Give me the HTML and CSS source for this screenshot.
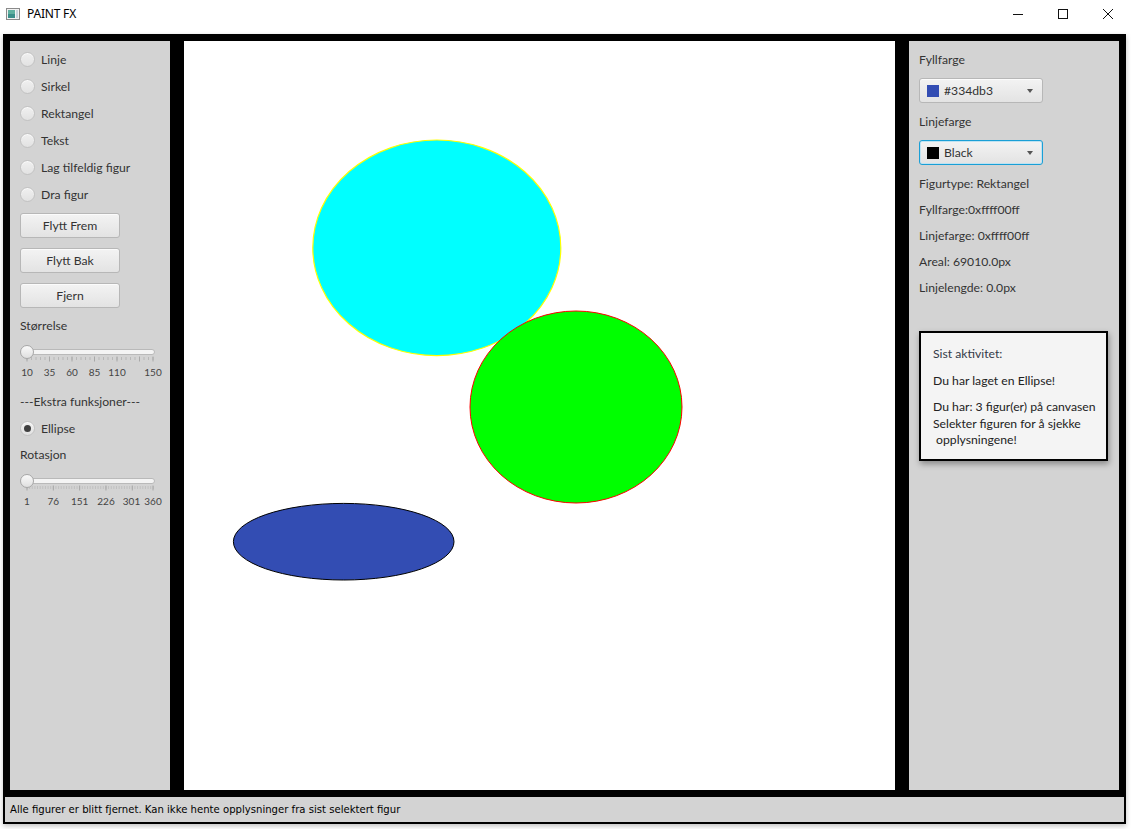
FILE: index.html
```html
<!DOCTYPE html>
<html lang="no">
<head>
<meta charset="utf-8">
<title>PAINT FX</title>
<link rel="stylesheet" href="styles.css">
</head>
<body>
<header class="titlebar">
  <svg class="appicon" width="14" height="12" viewBox="0 0 14 12">
    <rect x="0.5" y="0.5" width="13" height="11" fill="#f2f2f2" stroke="#8a8a8a"/>
    <rect x="2" y="2" width="7" height="8" fill="#3b8f8a"/>
    <rect x="2" y="2" width="7" height="4" fill="#5fb0a0"/>
    <rect x="10" y="2" width="2" height="8" fill="#c8d4dc"/>
  </svg>
  <span class="wintitle">PAINT FX</span>
  <div class="winctrls">
    <span class="wbtn"><svg width="10" height="10" viewBox="0 0 10 10"><path d="M0 5.5h10" stroke="#111" stroke-width="1"/></svg></span>
    <span class="wbtn"><svg width="10" height="10" viewBox="0 0 10 10"><rect x="0.5" y="0.5" width="9" height="9" fill="none" stroke="#111"/></svg></span>
    <span class="wbtn"><svg width="10" height="10" viewBox="0 0 10 10"><path d="M0 0L10 10M10 0L0 10" stroke="#111" stroke-width="1"/></svg></span>
  </div>
</header>

<div class="app">
  <div class="frame">
    <aside class="panel left">
      <div class="radio"><span class="rb"></span>Linje</div>
      <div class="radio"><span class="rb"></span>Sirkel</div>
      <div class="radio"><span class="rb"></span>Rektangel</div>
      <div class="radio"><span class="rb"></span>Tekst</div>
      <div class="radio"><span class="rb"></span>Lag tilfeldig figur</div>
      <div class="radio"><span class="rb"></span>Dra figur</div>
      <button class="btn">Flytt Frem</button>
      <button class="btn">Flytt Bak</button>
      <button class="btn">Fjern</button>
      <div class="lbl">Størrelse</div>
      <svg class="slider" width="145" height="34" viewBox="0 0 145 34">
        <rect x="0.5" y="4.5" width="134" height="5" rx="2.5" fill="#f4f4f4" stroke="#b9b9b9"/>
        <line x1="6.5" y1="13.5" x2="134" y2="13.5" stroke="#b8b8b8" stroke-width="3" stroke-dasharray="1 3.5"/>
        <line x1="6.5" y1="14" x2="134" y2="14" stroke="#a8a8a8" stroke-width="5" stroke-dasharray="1 21.5"/>
        <line x1="133" y1="11.5" x2="133" y2="16.5" stroke="#a8a8a8" stroke-width="1"/>
        <g class="ticklbl" text-anchor="middle">
          <text x="7" y="30.5">10</text>
          <text x="29.5" y="30.5">35</text>
          <text x="52" y="30.5">60</text>
          <text x="74.5" y="30.5">85</text>
          <text x="97" y="30.5">110</text>
          <text x="133" y="30.5">150</text>
        </g>
        <defs>
          <linearGradient id="thumb" x1="0" y1="0" x2="0" y2="1">
            <stop offset="0" stop-color="#fbfbfb"/>
            <stop offset="1" stop-color="#dedede"/>
          </linearGradient>
        </defs>
        <circle cx="7" cy="7" r="6.5" fill="url(#thumb)" stroke="#a6a6a6"/>
      </svg>
      <div class="lbl sep">---Ekstra funksjoner---</div>
      <div class="radio on"><span class="rb"></span>Ellipse</div>
      <div class="lbl">Rotasjon</div>
      <svg class="slider" width="145" height="34" viewBox="0 0 145 34">
        <rect x="0.5" y="4.5" width="134" height="5" rx="2.5" fill="#f4f4f4" stroke="#b9b9b9"/>
        <line x1="6.5" y1="13.5" x2="134" y2="13.5" stroke="#c0c0c0" stroke-width="3" stroke-dasharray="1 1.632"/>
        <line x1="6.5" y1="14" x2="134" y2="14" stroke="#a8a8a8" stroke-width="5" stroke-dasharray="1 25.32"/>
        <line x1="133" y1="11.5" x2="133" y2="16.5" stroke="#a8a8a8" stroke-width="1"/>
        <g class="ticklbl" text-anchor="middle">
          <text x="7" y="30.5">1</text>
          <text x="33.3" y="30.5">76</text>
          <text x="59.6" y="30.5">151</text>
          <text x="86" y="30.5">226</text>
          <text x="111.5" y="30.5">301</text>
          <text x="133" y="30.5">360</text>
        </g>
        <circle cx="7" cy="7" r="6.5" fill="url(#thumb)" stroke="#a6a6a6"/>
      </svg>
    </aside>

    <main class="canvas">
      <svg width="711" height="749" viewBox="0 0 711 749">
        <ellipse cx="159.7" cy="500.7" rx="110.3" ry="38.3" fill="#334db3" stroke="#000" stroke-width="1"/>
        <ellipse cx="252.8" cy="206.8" rx="124" ry="107.8" fill="#00ffff" stroke="#ffff00" stroke-width="1.2"/>
        <ellipse cx="392" cy="366" rx="106" ry="96" fill="#00ff00" stroke="#ff0000" stroke-width="1"/>
      </svg>
    </main>

    <aside class="panel right">
      <div class="lbl">Fyllfarge</div>
      <div class="combo"><span class="sw" style="background:#334db3"></span><span class="ctext">#334db3</span><span class="arrow"></span></div>
      <div class="lbl gap11">Linjefarge</div>
      <div class="combo focus"><span class="sw" style="background:#000000"></span><span class="ctext">Black</span><span class="arrow"></span></div>
      <div class="lbl gap11">Figurtype: Rektangel</div>
      <div class="lbl">Fyllfarge:0xffff00ff</div>
      <div class="lbl">Linjefarge: 0xffff00ff</div>
      <div class="lbl">Areal: 69010.0px</div>
      <div class="lbl">Linjelengde: 0.0px</div>
      <div class="tip">
        <div class="tiptitle">Sist aktivitet:</div>
        <div class="tipline">Du har laget en Ellipse!</div>
        <div class="tipmulti">Du har: 3 figur(er) på canvasen<br>Selekter figuren for å sjekke<br>&nbsp;opplysningene!</div>
      </div>
    </aside>
  </div>
  <footer class="status">Alle figurer er blitt fjernet. Kan ikke hente opplysninger fra sist selektert figur</footer>
</div>
</body>
</html>
```

FILE: styles.css
```css
* { box-sizing: border-box; }

html, body {
  margin: 0;
  padding: 0;
  background: #ffffff;
}

body {
  width: 1131px;
  height: 829px;
  overflow: hidden;
  font-family: "Lato", "Liberation Sans", sans-serif;
  font-size: 12.2px;
  color: #333333;
}

/* ---------- title bar ---------- */
.titlebar {
  height: 34px;
  padding-bottom: 7px;
  display: flex;
  align-items: center;
  background: #ffffff;
}

.appicon {
  margin-left: 6px;
  flex: none;
}

.wintitle {
  margin-left: 7px;
  font-family: "Noto Sans", "Liberation Sans", sans-serif;
  font-size: 12px;
  color: #000;
  letter-spacing: -0.2px;
}

.winctrls {
  margin-left: auto;
  margin-right: 1px;
  display: flex;
}

.wbtn {
  width: 45px;
  height: 27px;
  display: flex;
  align-items: center;
  justify-content: center;
}

/* ---------- app frame ---------- */
.app {
  margin-left: 3px;
  width: 1123px;
  background: #000000;
  box-shadow: 0 2px 5px rgba(0, 0, 0, 0.25);
}

.frame {
  padding: 7px;
  display: grid;
  grid-template-columns: 160px 711px 210px;
  column-gap: 14px;
  height: 763px;
}

.panel {
  background: #d3d3d3;
  display: flex;
  flex-direction: column;
  align-items: flex-start;
}

.panel.left {
  padding: 10px 0 0 10px;
}

.panel.right {
  padding: 11px 0 0 10px;
}

.lbl {
  height: 16px;
  line-height: 16px;
  white-space: nowrap;
}

/* radios */
.radio {
  height: 17px;
  display: flex;
  align-items: center;
  margin-bottom: 10px;
  line-height: 17px;
}

.rb {
  width: 15px;
  height: 15px;
  border-radius: 50%;
  margin-right: 6px;
  border: 1px solid #c2c2c2;
  background: linear-gradient(#f0f0f0, #e2e2e2);
  box-shadow: inset 0 1px 0 rgba(255, 255, 255, 0.7);
  position: relative;
  flex: none;
}

.radio.on .rb::after {
  content: "";
  position: absolute;
  left: 3px;
  top: 3px;
  width: 7px;
  height: 7px;
  border-radius: 50%;
  background: #3f3f3f;
}

/* buttons */
.btn {
  width: 100px;
  height: 25px;
  margin-bottom: 10px;
  padding: 0;
  font-family: inherit;
  font-size: 12.2px;
  color: #333;
  border: 1px solid #b7b7b7;
  border-radius: 3px;
  background: linear-gradient(#f3f3f3, #e3e3e3);
  box-shadow: inset 0 1px 0 #fbfbfb;
}

.slider {
  display: block;
  margin-top: 11px;
  overflow: visible;
}

.ticklbl {
  font-family: "Lato", "Liberation Sans", sans-serif;
  font-size: 10px;
  fill: #444;
}

.lbl.sep {
  margin-top: 15px;
  margin-bottom: 10px;
}

/* canvas */
.canvas {
  background: #ffffff;
  overflow: hidden;
}

.canvas svg {
  display: block;
}

/* right panel */
.combo {
  margin-top: 10px;
  width: 124px;
  height: 25px;
  border: 1px solid #b7b7b7;
  border-radius: 3px;
  background: linear-gradient(#f3f3f3, #e3e3e3);
  box-shadow: inset 0 1px 0 #fbfbfb;
  display: flex;
  align-items: center;
  padding: 0 9px 0 7px;
}

.combo.focus {
  border-color: #1a9fd6;
  box-shadow: inset 0 0 0 1px #bfe2f1;
}

.sw {
  width: 12px;
  height: 12px;
  flex: none;
}

.ctext {
  margin-left: 5px;
  color: #333;
}

.arrow {
  margin-left: auto;
  width: 0;
  height: 0;
  border-left: 3.5px solid transparent;
  border-right: 3.5px solid transparent;
  border-top: 4px solid #555;
}

.gap11 {
  margin-top: 11px;
}

.right .lbl + .lbl {
  margin-top: 10px;
}

.tip {
  margin-top: 35px;
  width: 189px;
  border: 2px solid #000;
  background: #f4f4f4;
  padding: 13px 6px 10px 12px;
  box-shadow: 1px 3px 6px rgba(0, 0, 0, 0.35);
  color: #222;
}

.tiptitle {
  line-height: 16px;
  color: #333a48;
}

.tipline {
  margin-top: 11px;
  line-height: 16px;
}

.tipmulti {
  margin-top: 10px;
  line-height: 16.5px;
  white-space: nowrap;
}

/* status bar */
.status {
  height: 27px;
  border: 2px solid #000;
  border-top: 0;
  background: #d3d3d3;
  padding-left: 5px;
  font-family: "DejaVu Sans", "Liberation Sans", sans-serif;
  font-size: 10.1px;
  line-height: 25px;
  color: #000;
}
```
